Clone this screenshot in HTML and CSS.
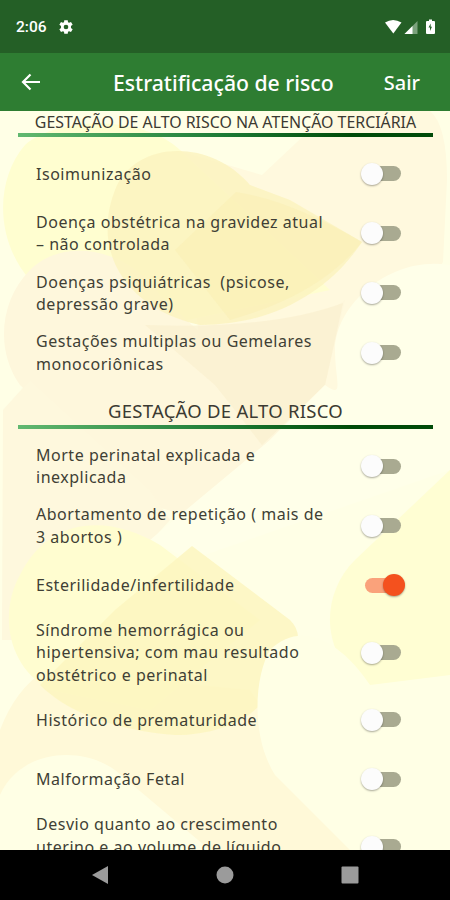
FILE: index.html
```html
<!DOCTYPE html>
<html lang="pt-BR">
<head>
    <meta charset="UTF-8">
    <meta name="viewport" content="width=device-width, initial-scale=1.0">
    <title>Estratificação de risco</title>
    <link rel="stylesheet" href="styles.css">
</head>
<body>

<div class="status-bar">
    <span class="clock">2:06</span>
    <svg class="gear" viewBox="0 0 24 24"><path fill="#fff" fill-rule="evenodd" d="M19.400 13.500a7.500 7.500 0 0 0 0-3l2.600-1.700-2.500-4.300-2.900 1.200a7.500 7.500 0 0 0-1.600-1L14.600 2H9.400L9 4.700a7.500 7.500 0 0 0-1.600 1L4.500 4.500 2 8.800l2.600 1.700a7.500 7.500 0 0 0 0 3L2 15.200l2.500 4.300 2.900-1.200a7.500 7.500 0 0 0 1.600 1l.4 2.700h5.200l.4-2.700a7.500 7.500 0 0 0 1.600-1l2.900 1.200 2.500-4.300zM12 15.500a3.500 3.500 0 1 1 0-7 3.500 3.500 0 0 1 0 7z"/></svg>
    <svg class="signals" viewBox="0 0 52 16">
        <path fill="#fff" d="M1 3.500Q9 -1.500 17.500 3.500L9.300 14.500z"/>
        <path fill="#7ba17c" d="M33.500 2v13H20.500z"/>
        <path fill="#fff" d="M28.500 7v8h-8z"/>
        <path fill="#fff" d="M43 2h2V.5h3V2h2q1 0 1 1v11q0 1-1 1h-7q-1 0-1-1V3q0-1 1-1z"/>
        <path fill="#245f26" d="M46.700 4.500l-2.200 4h1.500v3.500l2-4.300h-1.300z"/>
    </svg>
</div>

<header class="app-bar">
    <svg class="back" viewBox="0 0 20 18"><path d="M19 9H2M9.500 1.500L2 9l7.500 7.500" fill="none" stroke="#fff" stroke-width="2.200"/></svg>
    <h1>Estratificação de risco</h1>
    <a class="exit">Sair</a>
</header>

<main class="content">
    <!-- fundo com corações -->
    <svg class="hearts" viewBox="0 111 450 739" preserveAspectRatio="none">
        <path fill="#fff9de" d="M180 151L262 175L330 111H430Q447 125 447 180L443 262L350 400L300 450L200 350z"/>
        <path fill="#fffed0" d="M30 280C-5 240-5 180 25 145C60 115 150 115 185 155L330 290L140 330z"/>
        <path fill="#fef7dc" d="M30 270C65 235 130 250 160 295L240 370L345 300L325 385L210 500Q175 525 140 495L20 385C-5 350 0 300 30 270z"/>
        <path fill="#fcf3c0" fill-opacity=".85" d="M115 190C135 140 210 138 250 185L290 200L362 242C330 290 275 325 200 325C130 310 90 255 115 190z"/>
        <path fill="#faeeb4" fill-opacity=".55" d="M175 250L236 192Q290 200 362 242Q320 295 230 320z"/>
        <path fill="#f9efcf" fill-opacity=".7" d="M145 325Q270 330 343 303L325 385L262 445Q235 410 215 385z"/>
        <path fill="#fef8dd" d="M3 410L30 380L150 490L170 520L60 640L2 640z"/>
        <path fill="#ffffe9" d="M450 265C390 255 335 305 335 350C335 380 345 400 325 385L270 440L150 540L190 560L450 470z"/>
        <path fill="#fff9d8" d="M0 730Q15 690 45 670L250 690L360 850H0z"/>
        <path fill="#fffdd0" d="M20 575C50 515 110 515 160 545L260 620L150 710L50 690C5 665 0 610 20 575z"/>
        <path fill="#fdf6c0" fill-opacity=".85" d="M115 610L192 546L290 620Q310 640 280 670C270 710 230 735 175 735C110 730 65 710 40 685z"/>
        <path fill="#fffed3" d="M450 470L355 560C315 600 325 665 370 685C405 700 430 690 450 675z"/>
        <path fill="#ffffe5" d="M270 650C300 620 340 640 370 685L450 675V850H350L275 775C250 735 255 675 270 650z"/>
        <path fill="#ffffe5" d="M0 850V795C20 750 80 745 115 770L210 850z"/>
    </svg>

    <section class="group">
        <h2 class="small">GESTAÇÃO DE ALTO RISCO NA ATENÇÃO TERCIÁRIA</h2>
        <label class="item"><span>Isoimunização</span><input type="checkbox"></label>
        <label class="item"><span>Doença obstétrica na gravidez atual<br>– não controlada</span><input type="checkbox"></label>
        <label class="item"><span>Doenças psiquiátricas&nbsp; (psicose,<br>depressão grave)</span><input type="checkbox"></label>
        <label class="item"><span>Gestações multiplas ou Gemelares<br>monocoriônicas</span><input type="checkbox"></label>
    </section>

    <section class="group">
        <h2>GESTAÇÃO DE ALTO RISCO</h2>
        <label class="item"><span>Morte perinatal explicada e<br>inexplicada</span><input type="checkbox"></label>
        <label class="item"><span>Abortamento de repetição ( mais de<br>3 abortos )</span><input type="checkbox"></label>
        <label class="item"><span>Esterilidade/infertilidade</span><input type="checkbox" checked></label>
        <label class="item"><span>Síndrome hemorrágica ou<br>hipertensiva; com mau resultado<br>obstétrico e perinatal</span><input type="checkbox"></label>
        <label class="item"><span>Histórico de prematuridade</span><input type="checkbox"></label>
        <label class="item"><span>Malformação Fetal</span><input type="checkbox"></label>
        <label class="item tall"><span>Desvio quanto ao crescimento<br>uterino e ao volume de líquido</span><input type="checkbox"></label>
    </section>
</main>

<nav class="nav-bar">
    <svg viewBox="0 0 18 18"><path fill="#9b9b9b" d="M17 0v18L1 9z"/></svg>
    <svg viewBox="0 0 18 18"><circle fill="#9b9b9b" cx="9" cy="9" r="8.500"/></svg>
    <svg viewBox="0 0 18 18"><rect fill="#9b9b9b" x=".5" y=".5" width="17" height="17" rx="1"/></svg>
</nav>

</body>
</html>
```
FILE: styles.css
```css
* {
    margin: 0;
    padding: 0;
    box-sizing: border-box;
}

body {
    display: flex;
    flex-direction: column;
    height: 100vh;
    overflow: hidden;
    font-family: "Noto Sans", sans-serif;
    background: #ffffe6;
}

.status-bar {
    display: flex;
    align-items: center;
    flex: 0 0 53px;
    padding: 0 14px 0 16px;
    background: #245f26;
    color: white;
}

.clock {
    width: 42px;
    font: 500 15.5px Roboto, sans-serif;
}

.gear {
    width: 16px;
    height: 16px;
}

.signals {
    width: 52px;
    height: 16px;
    margin-left: auto;
}

.app-bar {
    display: flex;
    align-items: center;
    flex: 0 0 58px;
    padding: 0 30px 0 21px;
    background: #2e7d32;
    color: white;
}

.back {
    width: 20px;
    height: 18px;
}

.app-bar h1 {
    margin-left: 72px;
    font-size: 21.2px;
    font-weight: 500;
    white-space: nowrap;
}

.exit {
    margin-left: auto;
    font-size: 20px;
    font-weight: 500;
}

.content {
    position: relative;
    flex: 1;
    min-height: 0;
    overflow: hidden;
}

.hearts {
    position: absolute;
    top: 0;
    left: 0;
    width: 100%;
    height: 100%;
}

.group {
    position: relative;
    padding: 0 17px 0 18px;
}

.group h2 {
    height: 47px;
    margin-bottom: 7px;
    padding-top: 15px;
    border-bottom: 4px solid;
    border-image: linear-gradient(to right, #62b971, #1d7b35 50%, #004b08 80%) 1;
    font-size: 18.5px;
    font-weight: 400;
    line-height: 27px;
    letter-spacing: 0.25px;
    text-align: center;
    color: #3b3a32;
}

.group h2.small {
    height: 26px;
    padding-top: 0;
    font-size: 15.9px;
    line-height: 23px;
    letter-spacing: 0;
}

.item {
    display: flex;
    justify-content: space-between;
    align-items: center;
    min-height: 59.6px;
    padding: 4px 30px 4px 18px;
    font-size: 16px;
    line-height: 22.3px;
    letter-spacing: 0.52px;
    white-space: nowrap;
    color: #403f35;
}

.item.tall {
    height: 75px;
}

.item.tall span {
    align-self: flex-start;
}

.item input {
    position: relative;
    appearance: none;
    width: 36px;
    height: 15px;
    margin-right: 2px;
    border-radius: 8px;
    background: #a9aa91;
}

.item input::before {
    content: "";
    position: absolute;
    top: -3.5px;
    left: -4px;
    width: 22px;
    height: 22px;
    border-radius: 50%;
    background: #fcfcfc;
    box-shadow: 0 1px 2px rgba(0, 0, 0, 0.35);
}

.item input:checked {
    background: #faa27b;
}

.item input:checked::before {
    left: 18px;
    background: #f4511e;
}

.nav-bar {
    display: flex;
    justify-content: space-between;
    align-items: center;
    flex: 0 0 50px;
    padding: 0 91px;
    background: black;
}

.nav-bar svg {
    width: 18px;
    height: 18px;
}
```
